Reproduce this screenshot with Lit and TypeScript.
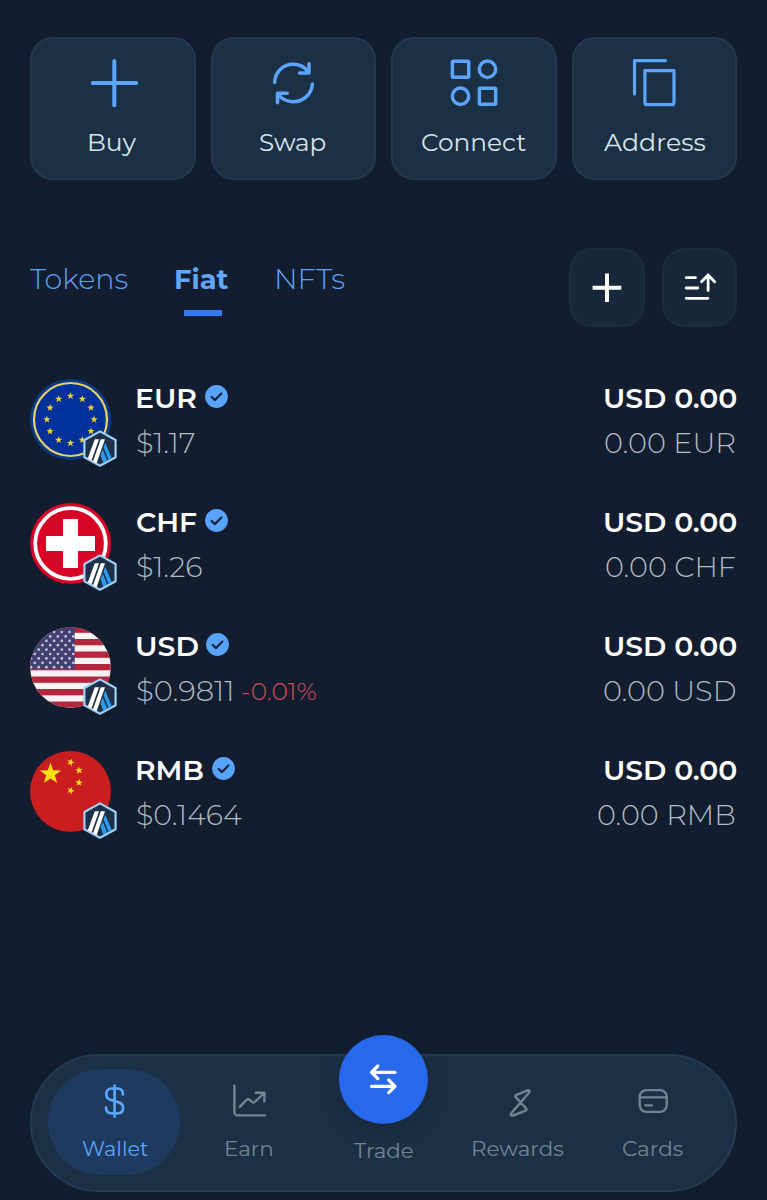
import { LitElement, html, svg, css, type TemplateResult } from "lit";
import { customElement, property, query } from "lit/decorators.js";

/** A single-line label stretched so that its ink spans exactly `span` pixels. */
@customElement("fit-label")
class FitLabel extends LitElement {
  @property() text = "";
  @property({ type: Number }) span = 0;
  @query(".t") private inner!: HTMLElement;

  static styles = css`
    :host { display: block; flex: none; white-space: nowrap; }
    .t { display: block; width: 0; transform-origin: 0 50%; }
  `;

  updated() {
    const cs = getComputedStyle(this);
    const ctx = document.createElement("canvas").getContext("2d")!;
    ctx.font = `${cs.fontWeight} ${cs.fontSize} ${cs.fontFamily}`;
    const m = ctx.measureText(this.text);
    const ink = m.actualBoundingBoxRight + m.actualBoundingBoxLeft;
    this.style.width = `${this.span}px`;
    this.inner.style.transform = `scaleX(${this.span / ink}) translateX(${m.actualBoundingBoxLeft}px)`;
  }

  render() {
    return html`<span class="t">${this.text}</span>`;
  }
}

const star = (cx: number, cy: number, r: number, turn = 0) => {
  const pts = Array.from({ length: 10 }, (_, i) => {
    const a = ((i * 36 - 90 + turn) * Math.PI) / 180;
    const q = i % 2 ? r * 0.4 : r;
    return `${(cx + q * Math.cos(a)).toFixed(2)},${(cy + q * Math.sin(a)).toFixed(2)}`;
  }).join(" ");
  return svg`<polygon points=${pts}></polygon>`;
};

const actionIcons: Record<string, TemplateResult> = {
  Buy: html`<svg viewBox="0 0 48 48" stroke-width="4"><path d="M3.7 24H47.2M25.3 2V46.3"/></svg>`,
  Swap: html`<svg viewBox="0 0 48 48" stroke-width="3.5"><path d="M5.6 23.4C6 13 14 5.3 24 5.3C30.6 5.3 36.5 8.6 39.7 13.7M40 4.7V14.1H30.5M43.4 25C42.7 35 34.5 42.7 24.3 42.7C17.5 42.7 12 39.6 8.7 34.6M8.5 43.8V34.3H18.2"/></svg>`,
  Connect: html`<svg viewBox="0 0 48 48" stroke-width="3.5"><rect x="2.4" y="2.3" width="16.3" height="16" rx="1"/><circle cx="37.5" cy="10.3" r="8.2"/><circle cx="10.5" cy="37.3" r="8.2"/><rect x="29.4" y="29.2" width="16.3" height="16" rx="1"/></svg>`,
  Address: html`<svg viewBox="0 0 48 48" stroke-width="3.2"><path d="M35.3 1.7H4.5V35"/><path d="M14.9 11.7H44V43.4a2.3 2.3 0 0 1-2.3 2.3H17.2a2.3 2.3 0 0 1-2.3-2.3Z"/></svg>`,
};

const navIcons: Record<string, TemplateResult> = {
  Wallet: html`<svg viewBox="0 0 34 34" stroke-width="2.7"><path d="M17.6 1.6V32.6M26 10.4C26 6.5 23.9 4.5 20.4 4.5H14.9C11.4 4.5 9.3 6.7 9.3 10.2C9.3 13.3 10.6 14.9 13.4 15.8L21.7 18.4C24.7 19.3 26.1 20.9 26.1 24C26.1 27.4 23.9 29.4 20.6 29.4H14.9C11.3 29.4 9 27.3 9 23.5"/></svg>`,
  Earn: html`<svg viewBox="0 0 34 34" stroke-width="2.4"><path d="M2.4 1.8V28.4a3 3 0 0 0 3 3H33M7.8 22.8L14.3 16.2Q16.2 14.5 18 16.2L19.8 17.9Q21.5 19.2 23.3 17.5L32.2 8.9M23.8 8.7H32.4V17.3"/></svg>`,
  Rewards: html`<svg viewBox="0 0 34 34" stroke-width="2.4"><path d="M26.6 6.3L15.5 10.8Q13.6 11.7 14.9 13.4L25 24.2Q26.3 26 24.3 26.9L11.8 31.5Q9 32 10 29.5L28.2 8.5Q29 5.5 26.6 6.3Z"/></svg>`,
  Cards: html`<svg viewBox="0 0 34 34" stroke-width="2.3"><rect x="3.7" y="6.1" width="27" height="21.7" rx="6.5"/><path d="M3.7 13.3H30.7M9.2 21.3H15.8"/></svg>`,
};

const flags: Record<string, TemplateResult> = {
  EUR: html`<svg viewBox="0 0 81 81"><circle cx="40.5" cy="40.5" r="40.5" fill="#0b3985"/><circle cx="40.5" cy="40.5" r="36.5" fill="#03319b" stroke="#e6d268" stroke-width="2.2"/><g fill="#f1cf35">${Array.from({ length: 12 }, (_, i) =>
    star(40.5 + 23.6 * Math.sin((i * Math.PI) / 6), 40.5 - 23.6 * Math.cos((i * Math.PI) / 6), 3.9))}</g></svg>`,
  CHF: html`<svg viewBox="0 0 81 81"><circle cx="40.5" cy="40.5" r="40.5" fill="#d80425"/><circle cx="40.5" cy="40.5" r="35.3" fill="none" stroke="#fff" stroke-width="3.8"/><path fill="#fff" d="M33 16H48V33H65V48H48V65H33V48H16V33H33Z"/></svg>`,
  USD: html`<svg viewBox="0 0 81 81"><clipPath id="us"><circle cx="40.5" cy="40.5" r="40.3"/></clipPath><g clip-path="url(#us)"><rect width="81" height="81" fill="#f7f2f4"/>${Array.from({ length: 7 }, (_, i) =>
    svg`<rect y=${-0.5 + i * 12.5} width="81" height="6.3" fill="#b3283c"></rect>`)}<rect width="44.7" height="42.2" fill="#443f72"/><g fill="#c9c6dc">${Array.from({ length: 9 }, (_, r) =>
    Array.from({ length: 6 }, (_, c) => svg`<circle cx=${(r % 2 ? 4.8 : 1) + c * 7.7} cy=${5 + r * 4.4} r="1.35"></circle>`))}</g></g></svg>`,
  RMB: html`<svg viewBox="0 0 81 81"><circle cx="40.5" cy="40.5" r="40.5" fill="#ca1d20"/><g fill="#f9df16">${star(20.5, 22.9, 11.3)}${star(40.7, 11.3, 4, 22)}${star(49, 19.4, 4, -8)}${star(49, 31.6, 4, 6)}${star(40.7, 39.6, 4, 22)}</g></svg>`,
};

const chain = html`<svg viewBox="0 0 34 37"><path d="M17 1.4L32.6 10V27.2L17 35.7L1.4 27.2V10Z" fill="#1f3148" stroke="#9fcff3" stroke-width="2.2" stroke-linejoin="round"/><path fill="#fff" d="M11.8 9.3H16L8.5 30.5L4.8 28.3ZM17.8 9.3H22L13.6 33.3L10 31.3Z"/><path fill="#2a9cf2" d="M22.2 12.8L28.7 28L25.7 30L20.6 17.5ZM19.7 19.5L24.2 30.6L20.3 32.7L17.6 25.3Z"/></svg>`;
const verified = html`<svg class="verified" viewBox="0 0 23 23"><circle cx="11.5" cy="11.5" r="11.4" fill="#58a3fc"/><path d="M6.7 12L10 15.1L16.4 8.5" fill="none" stroke="#14233c" stroke-width="2.2" stroke-linecap="round" stroke-linejoin="round"/></svg>`;

const actions: [string, number][] = [["Buy", 47], ["Swap", 66], ["Connect", 104.5], ["Address", 101]];
const tabs: [string, number][] = [["Tokens", 97.5], ["Fiat", 52.5], ["NFTs", 67.5]];
const rows = [
  { code: "EUR", cw: 59.5, price: "$1.17", pw: 58, held: "0.00 EUR", hw: 129.5 },
  { code: "CHF", cw: 59.2, price: "$1.26", pw: 65.5, held: "0.00 CHF", hw: 129 },
  { code: "USD", cw: 60.8, price: "$0.9811", pw: 94.5, change: "-0.01%", held: "0.00 USD", hw: 131 },
  { code: "RMB", cw: 66.5, price: "$0.1464", pw: 105, held: "0.00 RMB", hw: 136.5 },
];
const nav: [string, number][] = [["Wallet", 66], ["Earn", 46.5], ["Trade", 59], ["Rewards", 90.5], ["Cards", 60]];

@customElement("app-root")
class AppRoot extends LitElement {
  static styles = css`
    :host { display: block; font-family: Montserrat, Inter, "Liberation Sans", sans-serif; }
    * { box-sizing: border-box; }
    svg { display: block; overflow: visible; }
    .page {
      height: 1200px; padding: 37px 30px 8px; background: #131d30;
      display: flex; flex-direction: column; overflow: hidden;
    }
    .line { fill: none; stroke: currentColor; stroke-linecap: round; stroke-linejoin: round; }

    .actions { display: grid; grid-template-columns: repeat(4, 1fr); gap: 15px; height: 143px; }
    .action {
      display: flex; flex-direction: column; align-items: center; padding-top: 20px;
      border: 2px solid #243852; border-radius: 23px; background: #1c3045;
    }
    .action .line { width: 48px; height: 48px; color: #5aa4fb; }
    .action fit-label { margin-top: 20px; font-size: 24px; line-height: 32px; font-weight: 430; color: #d5e4ed; }

    .bar { display: flex; gap: 17px; height: 79px; margin-top: 68px; }
    .tabs { flex: 1; display: flex; gap: 48.5px; padding: 13px 0 0 0.3px; }
    .tab { display: flex; flex-direction: column; align-items: center; gap: 13px; color: #5da2f5; }
    .tab fit-label { font-size: 28.6px; line-height: 36px; font-weight: 340; }
    .tab.on fit-label { font-weight: 700; font-size: 27.5px; color: #61a8fc; }
    .underline { width: 38px; height: 6px; background: #2f7bf4; }
    .square {
      width: 75.5px; display: grid; place-items: center; color: #fff;
      border: 2px solid #1c2d43; border-radius: 23px; background: #18283b;
    }
    .square svg { width: 36px; height: 36px; }

    .list { margin-top: 30px; }
    .row { height: 124px; display: flex; align-items: center; }
    .avatar { position: relative; width: 81px; height: 81px; }
    .chain { position: absolute; left: 52.5px; top: 51.2px; width: 34px; height: 37px; }
    .info { flex: 1; padding: 1.5px 0 0 26px; }
    .amounts { padding: 1.5px 1px 0 0; display: flex; flex-direction: column; align-items: flex-end; }
    .cell { height: 44.5px; display: flex; align-items: center; }
    .strong { font-size: 28px; line-height: 44px; font-weight: 600; color: #fff; }
    .soft { margin-top: 1px; font-size: 28.3px; line-height: 44px; font-weight: 330; color: #b1bac3; }
    .amounts .soft { margin-right: 1.2px; }
    .verified { width: 23px; height: 23px; margin: -3px 0 0 8.5px; }
    .change { font-size: 25px; line-height: 44px; font-weight: 330; color: #d94c58; margin: 2px 0 0 10px; }

    .nav {
      margin-top: auto; height: 138px; padding: 13px 15px 0; border: 2px solid #243b54;
      border-radius: 69px; background: #1c3045; display: grid; grid-template-columns: repeat(5, 1fr);
      align-items: start; justify-items: center;
    }
    .item {
      width: 132px; height: 106px; border-radius: 53px; padding-top: 15px; color: #708594;
      display: flex; flex-direction: column; align-items: center;
    }
    .item .line { width: 34px; height: 34px; }
    .item fit-label { margin: 18px 0 0 1px; font-size: 21px; line-height: 26px; font-weight: 450; }
    .item.on { background: #1e3a5f; color: #5aa6fd; }
    .item.trade { padding: 0; }
    .trade fit-label { margin: 14px 0 0 0; }
    .fab {
      width: 89px; height: 89px; flex: none; margin-top: -34.5px; border-radius: 50%; background: #2768ec;
      color: #fff; display: grid; place-items: center; box-shadow: 0 6px 18px rgba(15, 25, 40, 0.4);
    }
    .fab .line { width: 30px; height: 30px; }
  `;

  render() {
    return html`<main class="page">
      <section class="actions">
        ${actions.map(([name, w]) => html`<div class="action">
          <div class="line">${actionIcons[name]}</div>
          <fit-label .text=${name} .span=${w}></fit-label>
        </div>`)}
      </section>

      <section class="bar">
        <div class="tabs">
          ${tabs.map(([name, w]) => html`<div class="tab ${name === "Fiat" ? "on" : ""}">
            <fit-label .text=${name} .span=${w}></fit-label>
            ${name === "Fiat" ? html`<div class="underline"></div>` : ""}
          </div>`)}
        </div>
        <div class="square"><svg viewBox="0 0 36 36"><path d="M3.6 17.8H32.3M18 3.5V32.1" stroke="#fff" stroke-width="4"/></svg></div>
        <div class="square"><svg class="line" viewBox="0 0 36 36" stroke-width="2.8"><path d="M5.2 7.7H14.5M5.2 18H16.8M5.2 28.3H27M27.1 5V20.5M20.5 11.7L27.1 5L33.7 11.7"/></svg></div>
      </section>

      <section class="list">
        ${rows.map((r) => html`<div class="row">
          <div class="avatar">${flags[r.code]}<div class="chain">${chain}</div></div>
          <div class="info">
            <div class="cell"><fit-label class="strong" .text=${r.code} .span=${r.cw}></fit-label>${verified}</div>
            <div class="cell"><fit-label class="soft" .text=${r.price} .span=${r.pw}></fit-label>
              ${r.change ? html`<fit-label class="change" .text=${r.change} .span=${74.5}></fit-label>` : ""}</div>
          </div>
          <div class="amounts">
            <div class="cell"><fit-label class="strong" .text=${"USD 0.00"} .span=${131.5}></fit-label></div>
            <div class="cell"><fit-label class="soft" .text=${r.held} .span=${r.hw}></fit-label></div>
          </div>
        </div>`)}
      </section>

      <nav class="nav">
        ${nav.map(([name, w]) => name === "Trade"
          ? html`<div class="item trade">
              <div class="fab"><svg class="line" viewBox="0 0 30 30" stroke-width="3.3"><path d="M3.5 8.3H27M9.8 2L3.5 8.3L9.8 14.6M3.5 22.3H27M20.7 16L27 22.3L20.7 28.6"/></svg></div>
              <fit-label .text=${name} .span=${w}></fit-label>
            </div>`
          : html`<div class="item ${name === "Wallet" ? "on" : ""}">
              <div class="line">${navIcons[name]}</div>
              <fit-label .text=${name} .span=${w}></fit-label>
            </div>`)}
      </nav>
    </main>`;
  }
}
